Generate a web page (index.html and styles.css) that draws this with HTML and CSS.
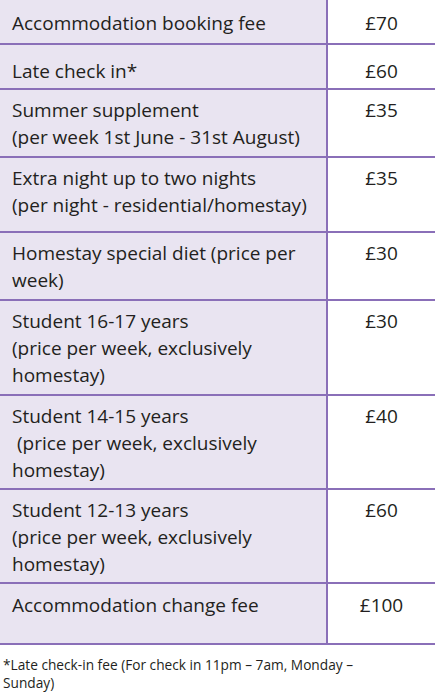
FILE: index.html
```html
<!DOCTYPE html>
<html>
<head>
<meta charset="utf-8">
<link rel="stylesheet" href="styles.css">
</head>
<body>
<table class="fees">
  <tr class="r1"><td class="item">Accommodation booking fee</td><td class="price">£70</td></tr>
  <tr class="r2"><td class="item">Late check in*</td><td class="price">£60</td></tr>
  <tr class="r3"><td class="item">Summer supplement<br>(per week 1st June - 31st August)</td><td class="price">£35</td></tr>
  <tr class="r4"><td class="item">Extra night up to two nights<br>(per night - residential/homestay)</td><td class="price">£35</td></tr>
  <tr class="r5"><td class="item">Homestay special diet (price per<br>week)</td><td class="price">£30</td></tr>
  <tr class="r6"><td class="item">Student 16-17 years<br>(price per week, exclusively<br>homestay)</td><td class="price">£30</td></tr>
  <tr class="r7"><td class="item">Student 14-15 years<br>&nbsp;(price per week, exclusively<br>homestay)</td><td class="price">£40</td></tr>
  <tr class="r8"><td class="item">Student 12-13 years<br>(price per week, exclusively<br>homestay)</td><td class="price">£60</td></tr>
  <tr class="r9"><td class="item">Accommodation change fee</td><td class="price">£100</td></tr>
</table>
<p class="note">*Late check-in fee (For check in 11pm – 7am, Monday –<br>Sunday)</p>
</body>
</html>
```
FILE: styles.css
```css
html, body {
  margin: 0;
  padding: 0;
  background: #ffffff;
}
body {
  font-family: "Open Sans", "Noto Sans", sans-serif;
  color: #231f20;
  width: 441px;
}
.fees {
  border-collapse: collapse;
  width: 435px;
  table-layout: fixed;
}
.fees td {
  vertical-align: top;
  font-size: 19px;
  line-height: 27px;
  padding: 7px 0 0 12px;
  border-bottom: 2px solid #8a6fb8;
  box-sizing: border-box;
  white-space: nowrap;
}
.fees td.item {
  width: 327px;
  background: #e9e4f1;
  border-right: 2px solid #8a6fb8;
}
.fees td.price {
  text-align: center;
  padding-left: 0;
}
.r1 td { height: 44px; padding-top: 10px; }
.r2 td { height: 45px; padding-top: 13px; }
.r3 td { height: 68px; }
.r4 td { height: 75px; }
.r5 td { height: 68px; }
.r6 td { height: 95px; }
.r7 td { height: 94px; }
.r8 td { height: 94px; }
.r9 td { height: 61px; padding-top: 8px; }
.note {
  margin: 11px 0 0 3px;
  font-size: 13.7px;
  line-height: 18px;
  color: #231f20;
}
```
